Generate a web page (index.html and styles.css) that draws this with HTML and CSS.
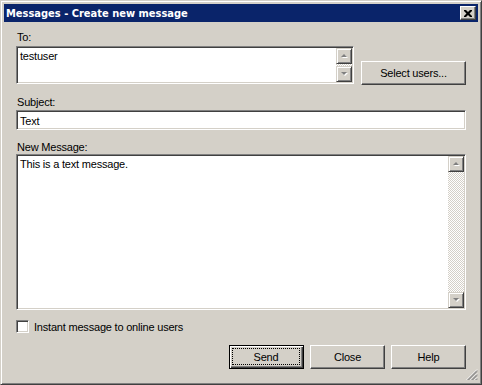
FILE: index.html
```html
<!DOCTYPE html>
<html lang="en">
<head>
    <meta charset="UTF-8">
    <title>Messages - Create new message</title>
    <link rel="stylesheet" href="styles.css">
</head>
<body>
    <div class="window">
        <!-- Title bar -->
        <div class="titlebar">
            <span class="title">Messages - Create new message</span>
            <span class="close-btn">
                <svg width="8" height="7" viewBox="0 0 8 7">
                    <path d="M0 0h2l2 2 2-2h2v1l-2.5 2.5L8 6v1H6L4 5 2 7H0V6l2.5-2.5L0 1z" fill="#000"/>
                </svg>
            </span>
        </div>

        <div class="content">
            <div class="label label-to">To:</div>
            <div class="to-row">
                <div class="field to-field">
                    <div class="field-text">testuser</div>
                    <div class="scrollbar">
                        <div class="scroll-btn">
                            <svg width="7" height="5" viewBox="0 0 7 5"><path d="M4 1l3 3H1z" fill="#fff"/><path d="M3 0l3 3H0z" fill="#808080"/></svg>
                        </div>
                        <div class="scroll-track"></div>
                        <div class="scroll-btn">
                            <svg width="7" height="5" viewBox="0 0 7 5"><path d="M1 1h6L4 4z" fill="#fff"/><path d="M0 0h6L3 3z" fill="#808080"/></svg>
                        </div>
                    </div>
                </div>
                <div class="button select-btn">Select users...</div>
            </div>

            <div class="label label-subject">Subject:</div>
            <div class="field subject-field">
                <div class="field-text">Text</div>
            </div>

            <div class="label label-message">New Message:</div>
            <div class="field message-field">
                <div class="field-text">This is a text message.</div>
                <div class="scrollbar">
                    <div class="scroll-btn">
                        <svg width="7" height="5" viewBox="0 0 7 5"><path d="M4 1l3 3H1z" fill="#fff"/><path d="M3 0l3 3H0z" fill="#808080"/></svg>
                    </div>
                    <div class="scroll-track"></div>
                    <div class="scroll-btn">
                        <svg width="7" height="5" viewBox="0 0 7 5"><path d="M1 1h6L4 4z" fill="#fff"/><path d="M0 0h6L3 3z" fill="#808080"/></svg>
                    </div>
                </div>
            </div>

            <div class="check-row">
                <span class="checkbox"></span>
                <span>Instant message to online users</span>
            </div>

            <div class="button-row">
                <div class="button default-btn"><span class="focus-ring">Send</span></div>
                <div class="button">Close</div>
                <div class="button">Help</div>
            </div>
        </div>

        <!-- Size grip in the corner -->
        <svg class="size-grip" width="12" height="12" viewBox="0 0 12 12">
            <path d="M11 0.5L0.5 11M11 4.5L4.5 11M11 8.5L8.5 11" stroke="#fff" stroke-width="1"/>
            <path d="M11 1.5L1.5 11M11 2.5L2.5 11M11 5.5L5.5 11M11 6.5L6.5 11M11 9.5L9.5 11M11 10.5L10.5 11" stroke="#808080" stroke-width="1"/>
        </svg>
    </div>
</body>
</html>
```

FILE: styles.css
```css
/* Basic styling */
body {
    margin: 0;
    background-color: #d4d0c8;
    font-family: "Liberation Sans", Arial, sans-serif;
    font-size: 11px;
    letter-spacing: -0.2px;
    color: #000;
}
.window {
    position: relative;
    width: 482px;
    height: 385px;
    box-sizing: border-box;
    border: 1px solid;
    border-color: #d4d0c8 #404040 #404040 #d4d0c8;
    box-shadow: inset 1px 1px #fff, inset -1px -1px #808080;
    padding: 3px 3px;
    background-color: #d4d0c8;
}
/* Title bar */
.titlebar {
    height: 18px;
    background-color: #0a246a;
    display: flex;
    align-items: center;
    justify-content: space-between;
    padding: 0 2px 0 2px;
}
.title {
    font-family: "DejaVu Sans Condensed", "DejaVu Sans", sans-serif;
    font-weight: bold;
    font-size: 11px;
    letter-spacing: 0;
    color: #fff;
}
.close-btn {
    width: 16px;
    height: 14px;
    box-sizing: border-box;
    background-color: #d4d0c8;
    border: 1px solid;
    border-color: #fff #404040 #404040 #fff;
    box-shadow: inset -1px -1px #808080;
    display: flex;
    align-items: center;
    justify-content: center;
}
.close-btn svg {
    display: block;
    margin-left: -1px;
}
/* Dialog content */
.content {
    padding: 8px 12px 0 12px;
    display: flex;
    flex-direction: column;
}
.label {
    line-height: 14px;
    padding-left: 1px;
}
.label-to {
    margin-bottom: 2px;
}
.label-subject {
    margin-top: 11px;
    margin-bottom: 1px;
}
.label-message {
    margin-top: 10px;
}
/* Sunken fields */
.field {
    box-sizing: border-box;
    background-color: #fff;
    border: 1px solid;
    border-color: #808080 #fff #fff #808080;
    box-shadow: inset 1px 1px #404040, inset -1px -1px #d4d0c8;
    padding: 1px;
    display: flex;
}
.field-text {
    flex: 1;
    padding: 1px 2px;
    line-height: 14px;
}
.to-row {
    display: flex;
    align-items: flex-end;
    gap: 7px;
}
.to-field {
    flex: 1;
    height: 38px;
}
.subject-field {
    height: 20px;
}
.subject-field .field-text {
    padding-top: 2px;
}
.message-field {
    height: 156px;
}
/* Scrollbar */
.scrollbar {
    width: 16px;
    display: flex;
    flex-direction: column;
}
.scroll-btn {
    width: 16px;
    height: 16px;
    box-sizing: border-box;
    background-color: #d4d0c8;
    border: 1px solid;
    border-color: #d4d0c8 #404040 #404040 #d4d0c8;
    box-shadow: inset 1px 1px #fff, inset -1px -1px #808080;
    display: flex;
    align-items: center;
    justify-content: center;
}
.scroll-btn svg {
    display: block;
}
.scroll-track {
    flex: 1;
    background: repeating-conic-gradient(#fff 0 25%, #d4d0c8 0 50%) 0 0 / 2px 2px;
}
/* Buttons */
.button {
    box-sizing: border-box;
    width: 75px;
    height: 24px;
    background-color: #d4d0c8;
    border: 1px solid;
    border-color: #fff #404040 #404040 #fff;
    box-shadow: inset -1px -1px #808080;
    display: flex;
    align-items: center;
    justify-content: center;
    line-height: 14px;
}
.select-btn {
    width: 105px;
    margin-bottom: -1px;
}
.default-btn {
    border: 1px solid #000;
    box-shadow: inset 1px 1px #fff, inset -1px -1px #404040, inset -2px -2px #808080;
    padding: 2px 3px 3px 2px;
}
.focus-ring {
    flex: 1;
    align-self: stretch;
    border: 1px dotted #000;
    display: flex;
    align-items: center;
    justify-content: center;
}
/* Checkbox */
.check-row {
    margin-top: 10px;
    display: flex;
    align-items: center;
    gap: 5px;
    height: 13px;
    line-height: 14px;
}
.checkbox {
    width: 13px;
    height: 13px;
    box-sizing: border-box;
    background-color: #fff;
    border: 1px solid;
    border-color: #808080 #fff #fff #808080;
    box-shadow: inset 1px 1px #404040, inset -1px -1px #d4d0c8;
}
.button-row {
    margin-top: 12px;
    display: flex;
    justify-content: flex-end;
    gap: 6px;
}
.size-grip {
    position: absolute;
    right: 3px;
    bottom: 3px;
}
```
